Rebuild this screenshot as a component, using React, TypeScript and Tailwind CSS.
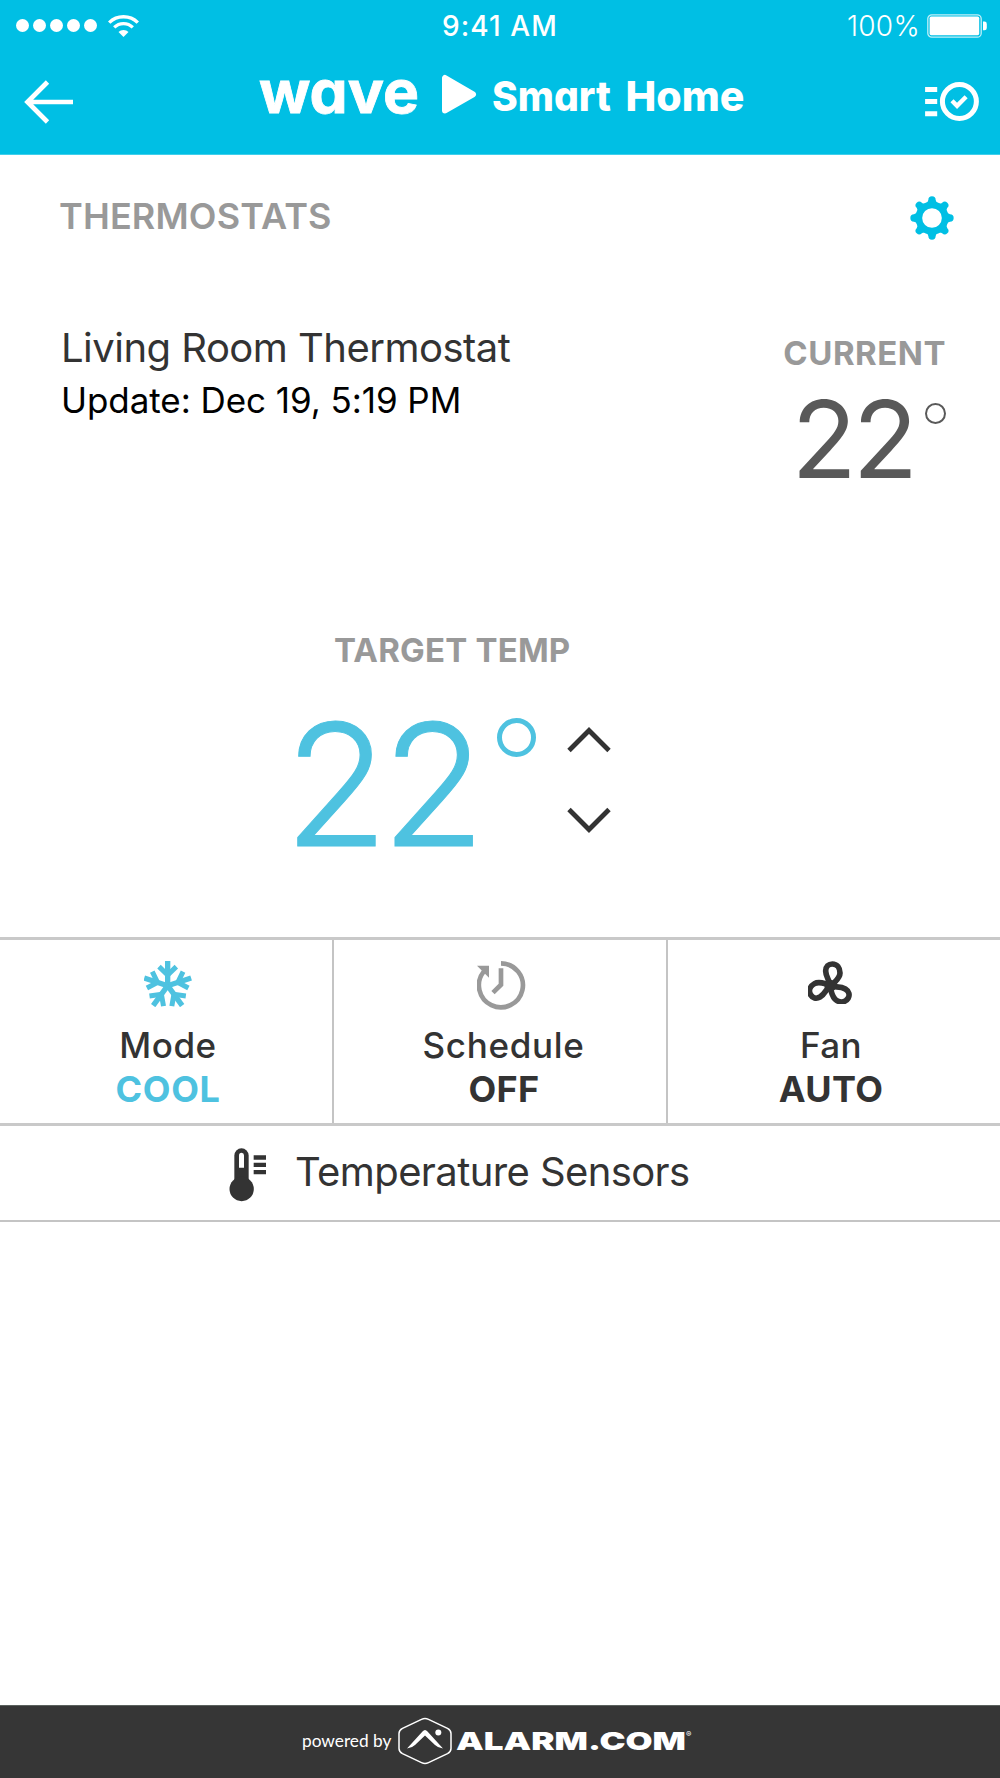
import React from 'react';

interface ControlProps {
  label: string;
  value: string;
  valueClass: string;
  className: string;
  labelClass: string;
  icon: React.ReactNode;
}

const WifiIcon = () => (
  <svg className="ml-[11px] h-[22px] w-[31px]" viewBox="0 0 31 22" fill="none" stroke="#fff">
    <path d="M1.2 7.6a20.3 20.3 0 0 1 28.6 0" strokeWidth="3.4" />
    <path d="M6.2 12.4a13.2 13.2 0 0 1 18.6 0" strokeWidth="3.2" />
    <path d="M15.5 22l-5-5a7 7 0 0 1 10 0z" fill="#fff" stroke="none" />
  </svg>
);

const BatteryIcon = () => (
  <svg className="h-6 w-[60px]" viewBox="0 0 60 24" fill="none">
    <rect x="0.8" y="0.8" width="53.4" height="22.4" rx="4" stroke="#fff" strokeOpacity="0.75" strokeWidth="1.3" />
    <rect x="2.6" y="2.6" width="49.6" height="18.6" rx="1.6" fill="#fff" />
    <path d="M56 7.5h1.4a2.4 2.4 0 0 1 2.4 2.4v4a2.4 2.4 0 0 1-2.4 2.4H56z" fill="#fff" />
  </svg>
);

const BackIcon = () => (
  <svg className="h-[44px] w-[50px]" viewBox="0 0 50 44" fill="none" stroke="#fff" strokeWidth="4.7">
    <path d="M23.5 2L3.5 22l20 20M3.5 22H49" />
  </svg>
);

const BrandLogo = () => (
  <svg className="h-[84px] w-[486px] overflow-visible" viewBox="0 -12 486 84" fill="#fff">
    <text
      x="-1"
      y="46.5"
      textLength="160"
      lengthAdjust="spacingAndGlyphs"
      stroke="#fff"
      strokeWidth="0.8"
      className="font-['Inter'] text-[59px] font-bold [font-feature-settings:'cv11']"
    >
      wave
    </text>
    <path d="M185 12v32.5l28-16.2z" stroke="#fff" strokeWidth="6" strokeLinejoin="round" />
    <g className="font-['Inter'] text-[41px] font-extrabold [font-feature-settings:'cv11']">
      <text x="232" y="44.5" textLength="119" lengthAdjust="spacingAndGlyphs">
        Smart
      </text>
      <text x="365.5" y="44.5" textLength="119" lengthAdjust="spacingAndGlyphs">
        Home
      </text>
    </g>
  </svg>
);

const SceneIcon = () => (
  <svg className="h-[39px] w-[54px]" viewBox="1275 246 160 116" fill="none" stroke="#fff" strokeWidth="15">
    <path d="M1275 268.5h36M1275 304h36M1275 340.5h36" />
    <circle cx="1377" cy="304" r="50.5" />
    <path d="M1355 302l15 15 27-27" strokeWidth="13" />
  </svg>
);

const GearIcon = () => (
  <svg className="mt-[3px] h-11 w-11" viewBox="-66 -66 132 132" fill="#00bfe4">
    <circle r="39.5" fill="none" stroke="#00bfe4" strokeWidth="20" />
    {[0, 45, 90, 135, 180, 225, 270, 315].map((angle) => (
      <path
        key={angle}
        d="M-21-42Q-11-48-11-54A11 11 0 0 1 11-54Q11-48 21-42z"
        transform={`rotate(${angle})`}
      />
    ))}
  </svg>
);

const ChevronIcon = ({ className = '' }: { className?: string }) => (
  <svg className={`h-[26px] w-[44px] ${className}`} viewBox="0 0 44 26" fill="none" stroke="#333" strokeWidth="4.8">
    <path d="M2 23.5L22 3.5l20 20" />
  </svg>
);

const SnowflakeIcon = () => (
  <svg className="h-[46px] w-12" viewBox="161 94 144 138" fill="none" stroke="#4ec2e0" strokeWidth="16">
    {[0, 72, 144, 216, 288].map((angle) => (
      <g key={angle} transform={`rotate(${angle} 232 168)`}>
        <path d="M232 168V94" />
        <path d="M206 111l26 25 26-25" strokeWidth="15" />
      </g>
    ))}
  </svg>
);

const ScheduleIcon = () => (
  <svg className="h-[49px] w-[49px]" viewBox="231 94 147 147" fill="none" stroke="#999">
    <path d="M303 101A66 66 0 1 1 251 126" strokeWidth="14" />
    <path d="M231 108h36v36z" fill="#999" stroke="none" />
    <path d="M303 116v49l-24 24" strokeWidth="14" />
  </svg>
);

const FanIcon = () => (
  <svg className="h-[43px] w-[45px]" viewBox="141 93 135 129" fill="none" stroke="#333" strokeWidth="17">
    {[0, 120, 240].map((angle) => (
      <path
        key={angle}
        d="M207 163C205 151 194 140 194 123C194 110 203 102 214 102C228 102 237 114 237 129C237 144 225 152 213 165"
        transform={`rotate(${angle} 208 167)`}
      />
    ))}
    <circle cx="208" cy="167" r="18" fill="#333" stroke="none" />
  </svg>
);

const ThermometerIcon = () => (
  <svg className="mt-[3px] h-[54px] w-[38px]" viewBox="88 112 114 162" fill="#333">
    <rect x="104" y="113" width="43" height="120" rx="21.5" />
    <circle cx="126" cy="235" r="36.5" />
    <path d="M118 171v-37a7.5 7.5 0 0 1 15 0v37z" fill="#fff" />
    <path d="M162 134h37v13h-37zM162 156h37v13h-37zM162 178h37v13h-37z" />
  </svg>
);

const AlarmMark = () => (
  <svg className="h-[48px] w-[54px]" viewBox="0 0 54 48" fill="none" stroke="#fff">
    <path
      d="M23.5 2.4Q27 .8 30.5 2.4L49.5 11.4Q53 13.2 53 16.5V31.5Q53 34.8 49.5 36.6L30.5 45.6Q27 47.2 23.5 45.6L4.5 36.6Q1 34.8 1 31.5V16.5Q1 13.2 4.5 11.4z"
      strokeWidth="1.5"
    />
    <path
      d="M9 31.5L24.5 14.5Q27 11.5 29.5 14.5L45 31.5Q40 31 37 28L27 18.5 17 28Q14 31 9 31.5z"
      fill="#fff"
      stroke="none"
    />
    <circle cx="40.3" cy="15.5" r="3" fill="#fff" stroke="none" />
  </svg>
);

const Control: React.FC<ControlProps> = ({ label, value, valueClass, className, labelClass, icon }) => (
  <div className={`flex flex-col items-center pt-[21px] ${className}`}>
    <div className="h-[62px]">{icon}</div>
    <span className={`text-[35px] font-medium leading-[44px] text-[#333] ${labelClass}`}>{label}</span>
    <span className={`text-[36px] font-bold leading-[44px] ${valueClass}`}>{value}</span>
  </div>
);

const App: React.FC = () => {
  return (
    <div className="flex h-[1778px] w-[1000px] flex-col overflow-hidden bg-white font-['Inter',sans-serif]">
      <header className="h-[155px] shrink-0 border-b border-[#40cfeb] bg-[#00bfe4] text-white">
        {/* Status bar */}
        <div className="grid h-[51px] grid-cols-3 items-center">
          <div className="flex items-center pl-4">
            <div className="flex gap-[4px]">
              {[0, 1, 2, 3, 4].map((dot) => (
                <span key={dot} className="h-[13px] w-[13px] rounded-full bg-white" />
              ))}
            </div>
            <WifiIcon />
          </div>
          <span className="text-center text-[28px] font-medium tracking-[1.1px]">9:41 AM</span>
          <div className="flex items-center justify-end gap-[7px] pr-[13px]">
            <span className="text-[28px] font-light tracking-[0.3px]">100%</span>
            <BatteryIcon />
          </div>
        </div>

        {/* Navigation */}
        <div className="flex h-[101px] items-center pl-[24px] pr-[21px]">
          <BackIcon />
          <div className="-mt-[11px] ml-[186px]">
            <BrandLogo />
          </div>
          <div className="ml-auto">
            <SceneIcon />
          </div>
        </div>
      </header>

      <main className="flex-1">
        <div className="flex h-[122px] items-center justify-between pl-[59px] pr-[46px]">
          <h1 className="text-[36px] font-semibold tracking-[0.15px] text-[#999]">THERMOSTATS</h1>
          <GearIcon />
        </div>

        <section className="flex h-[356px] justify-between pl-[61px] pr-[54px] pt-[45px]">
          <div>
            <h2 className="text-[40px] leading-[52px] tracking-[-0.52px] text-[#333]">Living Room Thermostat</h2>
            <p className="text-[35px] leading-[53px] tracking-[-0.06px] text-black">Update: Dec 19, 5:19 PM</p>
          </div>
          <div className="flex flex-col items-end pt-[14px]">
            <span className="text-[33px] font-bold leading-[34px] tracking-[0.5px] text-[#999]">CURRENT</span>
            <div className="flex text-[#595959]">
              <span className="text-[107px] font-normal leading-[139px] tracking-[-4px]">22</span>
              <span className="ml-[11px] mt-[33px] h-[21px] w-[21px] rounded-full border-2 border-[#595959]" />
            </div>
          </div>
        </section>

        {/* Target temperature */}
        <section className="h-[304px] pl-[284px]">
          <p className="pl-[50px] text-[33px] font-bold leading-[34px] tracking-[0.2px] text-[#999]">TARGET TEMP</p>
          <div className="flex">
            <span className="w-[200px] text-[170px] font-light leading-[234px] tracking-[-7px] text-[#4ec2e0] [-webkit-text-stroke:1px_#4ec2e0]">
              22
            </span>
            <span className="ml-[13px] mt-[51px] h-[39px] w-[39px] rounded-full border-[5px] border-[#4ec2e0]" />
            <div className="ml-[31px] flex flex-col gap-[54px] pt-[60px]">
              <ChevronIcon />
              <ChevronIcon className="rotate-180" />
            </div>
          </div>
        </section>

        <section className="flex h-[186px] border-t-[3px] border-[#c9c9c9]">
          <Control
            className="w-[334px] border-r-2 border-[#c4c4c4] pl-1"
            label="Mode"
            labelClass="tracking-[0.5px]"
            value="COOL"
            valueClass="tracking-[0.6px] text-[#4ec2e0]"
            icon={<SnowflakeIcon />}
          />
          <Control
            className="w-[334px] border-r-2 border-[#c4c4c4] pl-[3px]"
            label="Schedule"
            labelClass="pl-1 tracking-[0.7px]"
            value="OFF"
            valueClass="pl-[5px] tracking-[0.4px] text-[#333]"
            icon={<ScheduleIcon />}
          />
          <Control
            className="w-[332px] pr-[7px]"
            label="Fan"
            labelClass="pl-px tracking-[0.4px]"
            value="AUTO"
            valueClass="pl-px tracking-[0.4px] text-[#333]"
            icon={<FanIcon />}
          />
        </section>

        <section className="flex h-[99px] items-center border-b-2 border-t-[3px] border-b-[#c4c4c4] border-t-[#c9c9c9] pl-[229px]">
          <ThermometerIcon />
          <span className="-mt-0.5 ml-[28px] text-[40px] leading-[52px] tracking-[-0.6px] text-[#333]">
            Temperature Sensors
          </span>
        </section>
      </main>

      <footer className="flex h-[73px] items-center border-t border-[#5a615d] bg-[#363636] pb-0.5 pl-[302px] text-white">
        <span className="w-[89px] whitespace-nowrap font-['Lato'] text-[17.3px]">powered by</span>
        <div className="ml-[7px]">
          <AlarmMark />
        </div>
        <svg className="ml-1 h-[30px] w-[240px]" viewBox="0 0 240 30" fill="#fff">
          <text
            x="0"
            y="23.5"
            textLength="230"
            lengthAdjust="spacingAndGlyphs"
            className="font-['Inter'] text-[25px] font-black"
          >
            ALARM.COM
          </text>
          <text x="230" y="11" className="font-['Inter'] text-[8px]">
            ®
          </text>
        </svg>
      </footer>
    </div>
  );
};

export default App;
